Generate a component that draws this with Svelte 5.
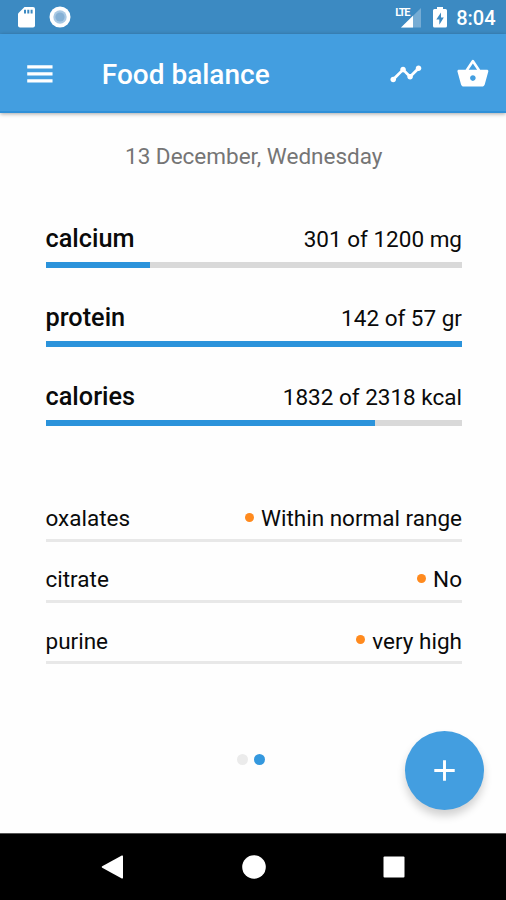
<!-- Food balance screen: daily nutrients + status list -->

<script>
  const date = "13 December, Wednesday";

  const nutrients = [
    { name: "calcium", value: 301, norm: 1200, unit: "mg" },
    { name: "protein", value: 142, norm: 57, unit: "gr" },
    { name: "calories", value: 1832, norm: 2318, unit: "kcal" }
  ];

  const substances = [
    { name: "oxalates", status: "Within normal range" },
    { name: "citrate", status: "No" },
    { name: "purine", status: "very high" }
  ];

  const percent = (n) => Math.min(100, (n.value / n.norm) * 100);
</script>

<div class="screen">
  <!-- STATUS BAR -->
  <div class="status-bar">
    <svg class="sd" viewBox="0 0 17 21">
      <path fill="#fff" d="M6.5 0H15a2 2 0 0 1 2 2v16.500a2 2 0 0 1-2 2H2a2 2 0 0 1-2-2V6.500z" />
      <path fill="#3c8ac2" d="M6 2.800h2v3.600H6zM9.300 2.800h2v3.600h-2zM12.600 2.800h2v3.600h-2z" />
    </svg>
    <svg class="sync" viewBox="0 0 22 22">
      <circle cx="11" cy="11" r="10.500" fill="#fff" />
      <circle cx="11" cy="11" r="6.700" fill="#a9c9e4" />
      <circle cx="11" cy="11" r="4.600" fill="#86b1d5" />
    </svg>
    <span class="spacer"></span>
    <div class="signal">
      <svg viewBox="0 0 20 20">
        <path fill="#76acd4" d="M20 0v19.500H0z" />
        <path fill="#fff" d="M12 7.800v11.700H0z" />
      </svg>
      <span class="lte">LTE</span>
    </div>
    <svg class="battery" viewBox="0 0 14 21">
      <path fill="#fff" d="M4 0h6v2h2.500A1.500 1.500 0 0 1 14 3.500v15.500a1.500 1.500 0 0 1-1.500 1.500h-11A1.500 1.500 0 0 1 0 19V3.500A1.500 1.500 0 0 1 1.500 2H4z" />
      <path fill="#3c8ac2" d="M8 5.500 3.300 12.500h3v5.200L10.800 10.500H8z" />
    </svg>
    <span class="clock">8:04</span>
  </div>

  <!-- APP BAR -->
  <header class="app-bar">
    <svg class="icon" viewBox="0 0 24 24">
      <path d="M3 18.200h18v-2.400H3v2.400zm0-5h18v-2.400H3v2.400zm0-7.400v2.400h18V5.800H3z" />
    </svg>
    <h1>Food balance</h1>
    <svg class="icon chart" viewBox="0 0 24 24">
      <path d="M23 8c0 1.100-.9 2-2 2-.18 0-.35-.02-.51-.07l-3.560 3.550c.05.16.07.34.07.52 0 1.100-.9 2-2 2s-2-.9-2-2c0-.18.02-.36.07-.52l-2.550-2.550c-.16.05-.34.07-.52.07s-.36-.02-.52-.07l-4.550 4.560c.05.16.07.33.07.51 0 1.100-.9 2-2 2s-2-.9-2-2 .9-2 2-2c.18 0 .35.02.51.07l4.560-4.550C8.020 9.360 8 9.180 8 9c0-1.100.9-2 2-2s2 .9 2 2c0 .18-.02.36-.07.52l2.550 2.550c.16-.05.34-.07.52-.07s.36.02.52.07l3.550-3.560C19.020 8.350 19 8.180 19 8c0-1.100.9-2 2-2s2 .9 2 2z" />
    </svg>
    <svg class="icon" viewBox="0 0 24 24">
      <path d="M17.210 9l-4.380-6.560c-.19-.28-.51-.42-.83-.42-.32 0-.64.14-.83.43L6.790 9H2c-.55 0-1 .45-1 1 0 .09.010.18.040.27l2.540 9.270c.23.84 1 1.460 1.920 1.460h13c.92 0 1.690-.62 1.930-1.460l2.540-9.270L23 10c0-.55-.45-1-1-1h-4.790zM9 9l3-4.400L15 9H9zm3 8c-1.100 0-2-.9-2-2s.9-2 2-2 2 .9 2 2-.9 2-2 2z" />
    </svg>
  </header>

  <!-- CONTENT -->
  <main>
    <p class="date">{date}</p>

    <section class="nutrients">
      {#each nutrients as n}
        <div class="nutrient">
          <div class="line">
            <span class="name">{n.name}</span>
            <span class="amount">{n.value} of {n.norm} {n.unit}</span>
          </div>
          <div class="track">
            <div class="fill" style="width: {percent(n)}%"></div>
          </div>
        </div>
      {/each}
    </section>

    <section class="substances">
      {#each substances as s}
        <div class="substance">
          <span class="label">{s.name}</span>
          <span class="dot"></span>
          <span class="status">{s.status}</span>
        </div>
      {/each}
    </section>

    <div class="pager">
      <span></span>
      <span class="active"></span>
    </div>

    <button class="fab" aria-label="Add">
      <svg viewBox="0 0 24 24"><path d="M19 13h-6v6h-2v-6H5v-2h6V5h2v6h6z" /></svg>
    </button>
  </main>

  <!-- NAVIGATION BAR -->
  <nav>
    <svg viewBox="0 0 24 24"><path d="M22 1.200v21.600q0 1.200-1.200.6L1.200 12.800q-1.200-.8 0-1.600L20.800.6Q22 0 22 1.200z" /></svg>
    <svg viewBox="0 0 24 24"><circle cx="12" cy="12" r="11.800" /></svg>
    <svg viewBox="0 0 24 24"><rect x="1.500" y="1.500" width="21" height="21" rx="1" /></svg>
  </nav>
</div>

<style>
  :global(body) {
    margin: 0;
    background: #fff;
  }

  .screen {
    display: flex;
    flex-direction: column;
    width: 506px;
    height: 900px;
    overflow: hidden;
    background: #fefefe;
    color: #0a0a0a;
    font-family: Roboto, "Liberation Sans", sans-serif;
  }

  svg {
    display: block;
    flex-shrink: 0;
  }

  /* STATUS BAR */
  .status-bar {
    display: flex;
    align-items: center;
    height: 34px;
    flex-shrink: 0;
    box-sizing: border-box;
    padding: 0 10.5px 0 17.5px;
    background: #3c8ac2;
    color: #fff;
  }
  .sd {
    width: 17px;
    height: 21px;
  }
  .sync {
    width: 22px;
    height: 22px;
    margin-left: 14px;
  }
  .spacer {
    flex: 1;
  }
  .signal {
    position: relative;
    margin-right: 12px;
    padding-top: 1px;
  }
  .signal svg {
    width: 20px;
    height: 20px;
  }
  .lte {
    position: absolute;
    left: -5.5px;
    top: 0.5px;
    font-size: 11px;
    line-height: 11px;
    font-weight: 700;
    letter-spacing: -1.2px;
  }
  .battery {
    width: 14px;
    height: 21px;
    margin-right: 9.5px;
  }
  .clock {
    font-size: 20px;
    font-weight: 500;
    line-height: 34px;
    padding-top: 2px;
  }

  /* APP BAR */
  .app-bar {
    display: flex;
    align-items: center;
    height: 79px;
    flex-shrink: 0;
    box-sizing: border-box;
    padding: 2px 16px 0 22.5px;
    background: #439ee0;
    border-bottom: 2px solid #2f90d8;
    box-shadow: 0 1px 4px rgba(0, 0, 0, 0.35);
    color: #fff;
    z-index: 1;
  }
  .icon {
    width: 33.75px;
    height: 33.75px;
    fill: #fff;
  }
  h1 {
    flex: 1;
    margin: 3px 0 0 45.5px;
    font-size: 28px;
    font-weight: 500;
    line-height: 34px;
  }
  .chart {
    margin-right: 34px;
  }

  /* CONTENT */
  main {
    position: relative;
    flex: 1;
    padding: 0 44px 0 45.5px;
  }
  .date {
    margin: 29px 0 0;
    text-align: center;
    font-size: 22.5px;
    line-height: 28px;
    color: #757575;
  }

  .nutrients {
    margin-top: 54px;
  }
  .nutrient {
    height: 79.2px;
  }
  .line {
    display: flex;
    justify-content: space-between;
    align-items: baseline;
    height: 38px;
    line-height: 30px;
    font-size: 22.5px;
  }
  .name {
    font-size: 25.3px;
    font-weight: 500;
  }
  .track {
    height: 5.5px;
    background: #d9d9d9;
  }
  .fill {
    height: 100%;
    background: #2b93db;
  }

  .substances {
    margin-top: 18.8px;
  }
  .substance {
    display: flex;
    align-items: center;
    height: 61.3px;
    box-sizing: border-box;
    padding-top: 17px;
    border-bottom: 3px solid #e8e8e8;
    font-size: 22.5px;
  }
  .label {
    flex: 1;
  }
  .dot {
    width: 9px;
    height: 9px;
    margin: -2px 7px 0 0;
    border-radius: 50%;
    background: #ff8a1e;
  }

  .pager {
    display: flex;
    justify-content: center;
    gap: 6px;
    margin: 89.5px 6px 0 0;
  }
  .pager span {
    width: 11px;
    height: 11px;
    border-radius: 50%;
    background: #ebebeb;
  }
  .pager .active {
    background: #3498de;
  }

  .fab {
    position: absolute;
    right: 22px;
    bottom: 23px;
    display: flex;
    align-items: center;
    justify-content: center;
    width: 79px;
    height: 79px;
    padding: 0;
    border: 0;
    border-radius: 50%;
    background: #439ee0;
    box-shadow: 0 6px 9px rgba(0, 0, 0, 0.18);
  }
  .fab svg {
    width: 35px;
    height: 35px;
    fill: #fff;
  }

  /* NAVIGATION BAR */
  nav {
    display: flex;
    align-items: center;
    justify-content: center;
    gap: 116.5px;
    height: 67px;
    flex-shrink: 0;
    box-sizing: border-box;
    padding-left: 1px;
    border-top: 1px solid #555;
    background: #000;
  }
  nav svg {
    width: 24px;
    height: 24px;
    fill: #fff;
  }
</style>
